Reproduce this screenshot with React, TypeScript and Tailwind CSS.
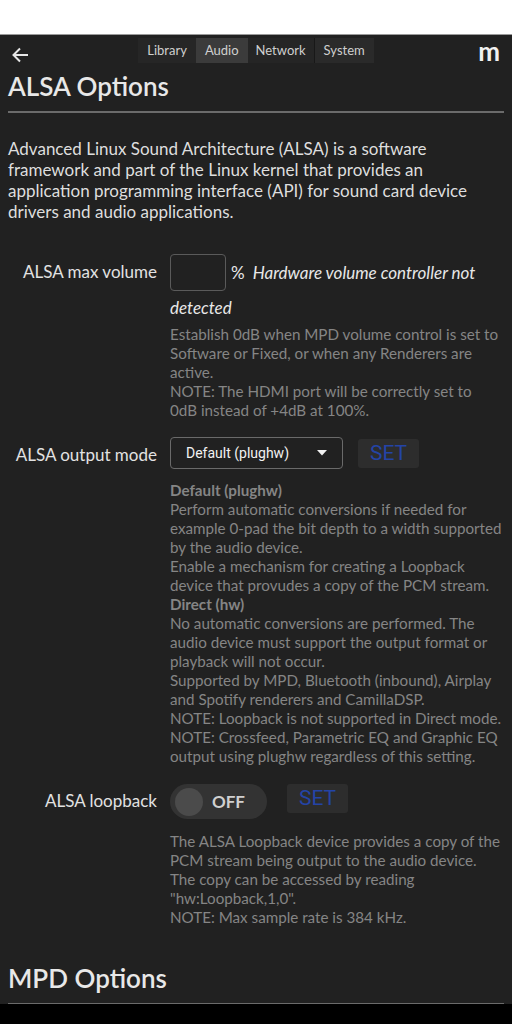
import React from "react";

const Row = ({
  label,
  labelPad,
  children,
  className,
}: {
  label: string;
  labelPad: string;
  children: React.ReactNode;
  className: string;
}) => (
  <div className={`flex items-start ${className}`}>
    <div className={`w-[149px] shrink-0 text-right text-[17px] leading-[21px] text-[#e2e2e2] ${labelPad}`}>{label}</div>
    <div className="ml-[13px] flex-1 min-w-0">{children}</div>
  </div>
);

const SetButton = ({ className }: { className: string }) => (
  <button
    className={`h-[29px] w-[61px] shrink-0 rounded-[3px] bg-[#2d2d2d] font-['Roboto',sans-serif] text-[21px] leading-[29px] text-[#2444a6] ${className}`}
  >
    SET
  </button>
);

export default function App() {
  return (
    <div className="flex h-[1024px] flex-col overflow-hidden font-['Lato',sans-serif]">
      <div className="h-[35px] shrink-0 border-b border-[#9a9a9a] bg-white" />

      <div className="flex-1 overflow-hidden bg-[#212121] px-2">
        {/* header */}
        <div className="grid h-[34px] grid-cols-[1fr_auto_1fr] items-start">
          <div className="pt-[11px] pl-[3px]">
            <svg width="18" height="18" viewBox="0 0 18 18" fill="none" stroke="#e6e6e6" strokeWidth="2">
              <path d="M17 9H2.5" />
              <path d="M9 2.5 2.5 9 9 15.5" />
            </svg>
          </div>
          <div className="mt-[3px] flex h-[25px] text-[13px] text-[#cfcfcf]">
            <div className="flex items-center bg-[#262626] px-[9px]">Library</div>
            <div className="flex items-center bg-[#3b3b3b] px-[9px]">Audio</div>
            <div className="flex items-center bg-[#252525] px-[8px]">Network</div>
            <div className="flex items-center border-l border-[#181818] bg-[#2a2a2a] px-[9px]">System</div>
          </div>
          <div className="pr-[4px] pt-[1px] text-right text-[26px] font-bold leading-[30px] text-[#f0f0f0]">m</div>
        </div>

        <h1 className="mt-[2px] text-[26px] font-semibold leading-[1.2] text-[#e8e8e8]">ALSA Options</h1>
        <div className="mt-[9px] h-[2px] bg-[#6b6b6b]" />

        <p className="mt-[25px] text-[17px] leading-[21px] text-[#dedede]">
          Advanced Linux Sound Architecture (ALSA) is a software framework and part of the Linux kernel that provides an
          application programming interface (API) for sound card device drivers and audio applications.
        </p>

        {/* max volume */}
        <Row label="ALSA max volume" labelPad="pt-[7px]" className="mt-[32px]">
          <div className="text-[17px] italic leading-[34px] text-[#e8e8e8]">
            <span className="inline-block h-[37px] w-[56px] rounded-[4px] border border-[#5a5a5a] align-[-12px]" />
            <span className="not-italic ml-[5px] mr-[8px]">%</span>
            Hardware volume controller not detected
          </div>
          <div className="text-[15.2px] leading-[19px] text-[#858585]">
            Establish 0dB when MPD volume control is set to Software or Fixed, or when any Renderers are active.
            <br />
            NOTE: The HDMI port will be correctly set to
            <br />
            0dB instead of +4dB at 100%.
          </div>
        </Row>

        {/* output mode */}
        <Row label="ALSA output mode" labelPad="pt-[7px]" className="mt-[17px]">
          <div className="flex items-start">
            <div className="flex h-[32px] w-[173px] items-center justify-between rounded-[4px] border border-[#6a6a6a] pl-[15px] pr-[15px] font-['Roboto',sans-serif] text-[14px] text-[#f2f2f2]">
              <span>Default (plughw)</span>
              <svg width="10" height="6" viewBox="0 0 10 6">
                <path d="M0 0h10L5 5.5z" fill="#f2f2f2" />
              </svg>
            </div>
            <SetButton className="ml-[15px] mt-[2px]" />
          </div>
          <div className="mt-[12px] text-[15.2px] leading-[19px] text-[#858585]">
            <div className="font-bold">Default (plughw)</div>
            Perform automatic conversions if needed for example 0-pad the bit depth to a width supported by the audio device.
            <br />
            Enable a mechanism for creating a Loopback device that provudes a copy of the PCM stream.
            <div className="font-bold">Direct (hw)</div>
            No automatic conversions are performed. The audio device must support the output format or playback will not
            occur.
            <br />
            Supported by MPD, Bluetooth (inbound), Airplay and Spotify renderers and CamillaDSP.
            <br />
            NOTE: Loopback is not supported in Direct mode.
            <br />
            NOTE: Crossfeed, Parametric EQ and Graphic EQ output using plughw regardless of this setting.
          </div>
        </Row>

        {/* loopback */}
        <Row label="ALSA loopback" labelPad="pt-[6px]" className="mt-[18px]">
          <div className="flex items-start">
            <div className="flex h-[35px] w-[97px] items-center rounded-full bg-[#333333] pl-[5px]">
              <div className="h-[28px] w-[28px] rounded-full bg-[#4b4b4b]" />
              <span className="ml-[9px] text-[17px] font-bold text-[#d0d0d0]">OFF</span>
            </div>
            <SetButton className="ml-[20px] w-[60px]" />
          </div>
          <div className="mt-[13px] text-[15.2px] leading-[19px] text-[#858585]">
            The ALSA Loopback device provides a copy of the PCM stream being output to the audio device.
            <br />
            The copy can be accessed by reading "hw:Loopback,1,0".
            <br />
            NOTE: Max sample rate is 384 kHz.
          </div>
        </Row>

        <h1 className="mt-[36px] text-[26px] font-semibold leading-[1.2] text-[#e8e8e8]">MPD Options</h1>
        <div className="mt-[9px] h-[2px] bg-[#6b6b6b]" />
      </div>

      <div className="h-[20px] shrink-0 bg-black" />
    </div>
  );
}
